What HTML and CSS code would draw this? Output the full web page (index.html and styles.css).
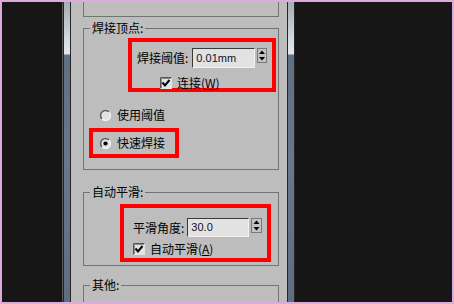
FILE: index.html
```html
<!DOCTYPE html>
<html lang="zh-CN">

<head>
    <meta charset="UTF-8">
    <title>焊接顶点</title>
    <link rel="stylesheet" href="styles.css">
</head>

<body>
<div class="frame">
    <div class="void"></div>
    <div class="rail rail-left"></div>
    <div class="panel">
        <div class="group-cut"></div>

        <fieldset class="group weld">
            <legend>焊接顶点:</legend>
            <div class="mark mark-thresh">
                <div class="field-row">
                    <span class="label">焊接阈值:</span>
                    <span class="spin-input">0.01mm</span>
                    <svg class="spinner" viewBox="0 0 10 15" width="10" height="15">
                        <rect x="0.5" y="0.5" width="9" height="14" fill="#c2c2c2" stroke="#7a7a7a"/>
                        <path d="M5 2.5L8 6H2Z" fill="#000"/>
                        <path d="M2 9H8L5 12.5Z" fill="#000"/>
                    </svg>
                </div>
                <div class="check-row">
                    <svg class="check" viewBox="0 0 12 12" width="12" height="12">
                        <rect width="12" height="12" fill="#e4e4e4"/>
                        <path d="M0.5 11.5V0.5H11.5" stroke="#555" fill="none"/>
                        <path d="M1.5 11V1.5H11" stroke="#8a8a8a" fill="none"/>
                        <path d="M2.5 5.5L5 8.5L9.5 3" stroke="#000" stroke-width="2" fill="none"/>
                    </svg>
                    <span>连接(<u>W</u>)</span>
                </div>
            </div>

            <div class="radio-row">
                <svg class="radio" viewBox="0 0 11 11" width="11" height="11">
                    <circle cx="5.5" cy="5.5" r="4.9" fill="#e2e2e2"/>
                    <path d="M2 9A4.95 4.95 0 0 1 9 2" stroke="#5a5a5a" stroke-width="1.4" fill="none"/>
                    <path d="M9 2A4.95 4.95 0 0 1 2 9" stroke="#f4f4f4" stroke-width="1.4" fill="none"/>
                </svg>
                <span>使用阈值</span>
            </div>

            <div class="mark mark-fast">
                <div class="radio-row">
                    <svg class="radio" viewBox="0 0 11 11" width="11" height="11">
                        <circle cx="5.5" cy="5.5" r="4.9" fill="#e2e2e2"/>
                        <path d="M2 9A4.95 4.95 0 0 1 9 2" stroke="#5a5a5a" stroke-width="1.4" fill="none"/>
                        <path d="M9 2A4.95 4.95 0 0 1 2 9" stroke="#f4f4f4" stroke-width="1.4" fill="none"/>
                        <circle cx="5.5" cy="5.5" r="2.1" fill="#000"/>
                    </svg>
                    <span>快速焊接</span>
                </div>
            </div>
        </fieldset>

        <fieldset class="group smooth">
            <legend>自动平滑:</legend>
            <div class="mark mark-smooth">
                <div class="field-row">
                    <span class="label">平滑角度:</span>
                    <span class="spin-input">30.0</span>
                    <svg class="spinner" viewBox="0 0 11 15" width="11" height="15">
                        <rect x="0.5" y="0.5" width="10" height="14" fill="#c2c2c2" stroke="#7a7a7a"/>
                        <path d="M5.5 2.5L8.5 6H2.5Z" fill="#000"/>
                        <path d="M2.5 9H8.5L5.5 12.5Z" fill="#000"/>
                    </svg>
                </div>
                <div class="check-row">
                    <svg class="check" viewBox="0 0 12 12" width="12" height="12">
                        <rect width="12" height="12" fill="#e4e4e4"/>
                        <path d="M0.5 11.5V0.5H11.5" stroke="#555" fill="none"/>
                        <path d="M1.5 11V1.5H11" stroke="#8a8a8a" fill="none"/>
                        <path d="M2.5 5.5L5 8.5L9.5 3" stroke="#000" stroke-width="2" fill="none"/>
                    </svg>
                    <span>自动平滑(<u>A</u>)</span>
                </div>
            </div>
        </fieldset>

        <fieldset class="group other">
            <legend>其他:</legend>
        </fieldset>
    </div>
    <div class="rail rail-right"></div>
    <div class="void void-right"></div>
</div>
</body>

</html>
```

FILE: styles.css
```css
* {
    box-sizing: border-box;
}

html,
body {
    margin: 0;
    font-family: "Noto Sans CJK SC", "Liberation Sans", sans-serif;
    font-size: 12px;
    color: #000;
}

.frame {
    display: flex;
    width: 454px;
    height: 304px;
    border: 2px solid #dcaadc;
    background: #161616;
    overflow: hidden;
}

.void {
    flex: none;
    width: 60px;
}

.void-right {
    flex: 1;
}

.rail {
    flex: none;
    background: linear-gradient(to bottom, #a4adb4 0, #d2d8db 36px, #e2e6e8 50px, #e2e6e8 52px, #5f7081 53px, #66788a 160px, #5e6e80 300px);
}

.rail-left {
    width: 9px;
    border-left: 1px solid #575757;
    border-right: 1px solid #262626;
    box-shadow: inset 1px 0 0 #232323;
}

.rail-right {
    width: 8px;
    border-left: 1px solid #262626;
    border-right: 1px solid #262626;
}

.panel {
    flex: none;
    width: 216px;
    padding: 0 8px 0 12px;
    background: #bdbdbd;
    overflow: hidden;
}

.group-cut {
    height: 15px;
    border: 1px solid #737373;
    border-top: 0;
}

.group {
    min-width: 0;
    margin: 4px 0 0;
    padding: 0 0 11px;
    border: 1px solid #737373;
}

.group legend {
    margin-left: 6px;
    padding: 0 2px;
    font-size: 12px;
    line-height: 14px;
}

.smooth {
    margin-top: 15px;
    padding-bottom: 3px;
}

.other {
    margin-top: 12px;
    height: 60px;
}

.mark {
    border: 4px solid #ff0000;
}

.mark-thresh {
    width: 148px;
    height: 54px;
    margin: 3px 0 0 44px;
    padding: 6px 0 0 5px;
}

.mark-fast {
    display: flex;
    align-items: center;
    width: 90px;
    height: 30px;
    margin: 6px 0 0 5px;
    padding-left: 7px;
}

.mark-smooth {
    width: 151px;
    height: 58px;
    margin: 5px 0 0 36px;
    padding: 10px 0 0 9px;
}

.field-row {
    display: flex;
    align-items: flex-start;
    height: 20px;
}

.field-row .label {
    line-height: 20px;
}

.spin-input {
    width: 63px;
    height: 20px;
    margin-left: 4px;
    padding-left: 3px;
    border: 1px solid;
    border-color: #3a3a3a #f2f2f2 #f2f2f2 #3a3a3a;
    background: #e2e2e2;
    font-family: "Liberation Sans", Arial, sans-serif;
    font-size: 11px;
    line-height: 18px;
    color: #10102a;
}

.spinner {
    flex: none;
    margin-left: 2px;
}

.mark-smooth .spin-input {
    width: 62px;
    height: 19px;
    margin-left: 3px;
    line-height: 17px;
}

.check-row {
    display: flex;
    align-items: center;
    gap: 5px;
    height: 12px;
    margin-top: 9px;
    padding-left: 23px;
    line-height: 12px;
}

.mark-smooth .check-row {
    margin-top: 5px;
    padding-left: 0;
}

.check,
.radio {
    flex: none;
}

.radio-row {
    display: flex;
    align-items: center;
    gap: 6px;
    height: 14px;
    line-height: 14px;
}

.weld > .radio-row {
    margin: 16px 0 0 16px;
}
```
